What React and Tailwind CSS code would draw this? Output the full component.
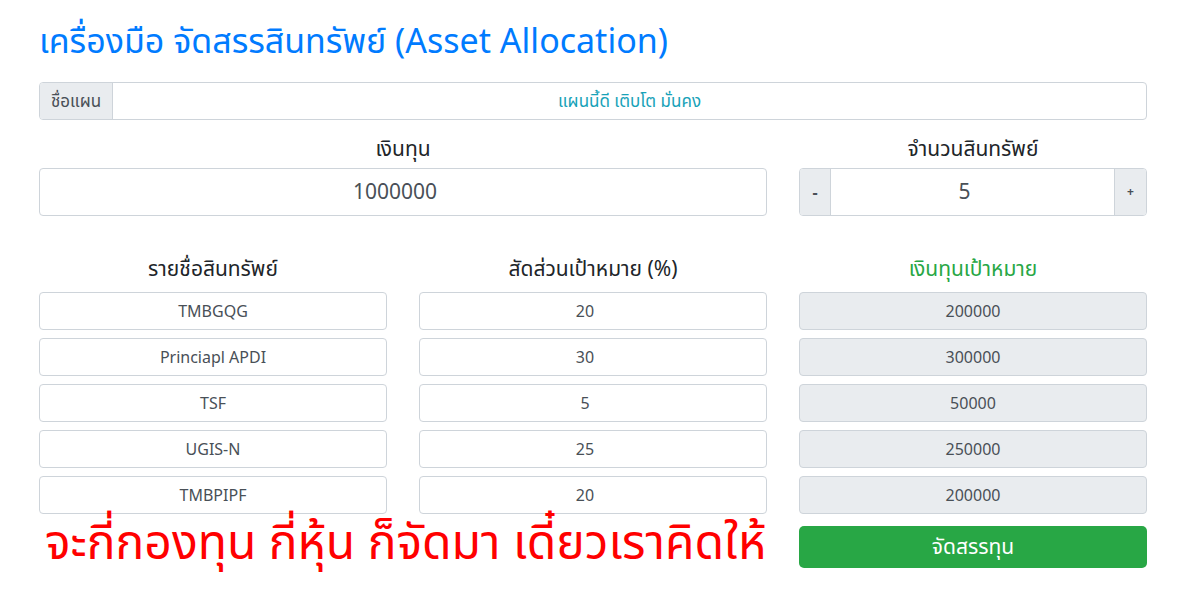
import React from "react";

const F = { fontFamily: '"Noto Sans", "Noto Sans Thai", sans-serif' };

export default function App() {
  const rows = [
    ["TMBGQG", "20", "200000"],
    ["Princiapl APDI", "30", "300000"],
    ["TSF", "5", "50000"],
    ["UGIS-N", "25", "250000"],
    ["TMBPIPF", "20", "200000"],
  ];
  return (
    <div className="w-[1200px] h-[600px] bg-white text-[#212529]" style={F}>
      <div className="ml-[39px] w-[1108px] pt-[20px]">
        <h2 className="h-[40px] text-[34px] leading-[40px] text-[#007bff] font-normal whitespace-nowrap">
          เครื่องมือ จัดสรรสินทรัพย์ (Asset Allocation)
        </h2>
        <div className="mt-[22px] flex h-[38px] rounded-[4px] border border-[#ced4da] overflow-hidden">
          <div className="w-[73px] shrink-0 bg-[#e9ecef] border-r border-[#ced4da] flex items-center justify-center text-[17px] text-[#495057]">
            ชื่อแผน
          </div>
          <div className="flex-1 flex items-center justify-center text-[17px] text-[#17a2b8]">
            แผนนี้ดี เติบโต มั่นคง
          </div>
        </div>

        <div className="mt-[16px] grid grid-cols-3 gap-x-[32px]">
          <div className="col-span-2">
            <div className="h-[24px] text-[21px] leading-[24px] text-center">เงินทุน</div>
            <div className="mt-[8px] h-[48px] pr-[16px] rounded-[4px] border border-[#ced4da] flex items-center justify-center text-[21px] text-[#495057]">
              1000000
            </div>
          </div>
          <div>
            <div className="h-[24px] text-[21px] leading-[24px] text-center">จำนวนสินทรัพย์</div>
            <div className="mt-[8px] h-[48px] flex rounded-[4px] border border-[#ced4da] overflow-hidden">
              <div className="w-[31px] bg-[#e9ecef] border-r border-[#ced4da] flex items-center justify-center text-[16px] font-bold text-[#495057]">
                -
              </div>
              <div className="flex-1 pr-[16px] flex items-center justify-center text-[21px] text-[#495057]">5</div>
              <div className="w-[32px] bg-[#e9ecef] border-l border-[#ced4da] flex items-center justify-center text-[12px] font-bold text-[#495057]">
                +
              </div>
            </div>
          </div>
        </div>

        <div className="mt-[40px] grid grid-cols-3 gap-x-[32px]">
          <div className="h-[24px] text-[21px] leading-[24px] text-center">รายชื่อสินทรัพย์</div>
          <div className="h-[24px] text-[21px] leading-[24px] text-center">สัดส่วนเป้าหมาย (%)</div>
          <div className="h-[24px] text-[21px] leading-[24px] text-center text-[#28a745]">เงินทุนเป้าหมาย</div>
        </div>
        <div className="mt-[12px] flex flex-col gap-[8px]">
          {rows.map((r, i) => (
            <div key={i} className="grid grid-cols-3 gap-x-[32px]">
              <div className="h-[38px] rounded-[4px] border border-[#ced4da] flex items-center justify-center text-[16px] text-[#495057]">
                {r[0]}
              </div>
              <div className="h-[38px] pr-[16px] rounded-[4px] border border-[#ced4da] flex items-center justify-center text-[16px] text-[#495057]">
                {r[1]}
              </div>
              <div className="h-[38px] rounded-[4px] border border-[#ced4da] bg-[#e9ecef] flex items-center justify-center text-[16px] text-[#495057]">
                {r[2]}
              </div>
            </div>
          ))}
        </div>
        <div className="mt-[12px] grid grid-cols-3 gap-x-[32px]">
          <div className="col-span-2 h-[42px] flex items-center pl-[6px] pb-[12px] whitespace-nowrap text-[48px] leading-[42px] text-[#ff0000]">
            จะกี่กองทุน กี่หุ้น ก็จัดมา เดี๋ยวเราคิดให้
          </div>
          <div className="h-[42px] rounded-[5px] bg-[#28a745] flex items-center justify-center text-[21px] text-white">
            จัดสรรทุน
          </div>
        </div>
      </div>
    </div>
  );
}
